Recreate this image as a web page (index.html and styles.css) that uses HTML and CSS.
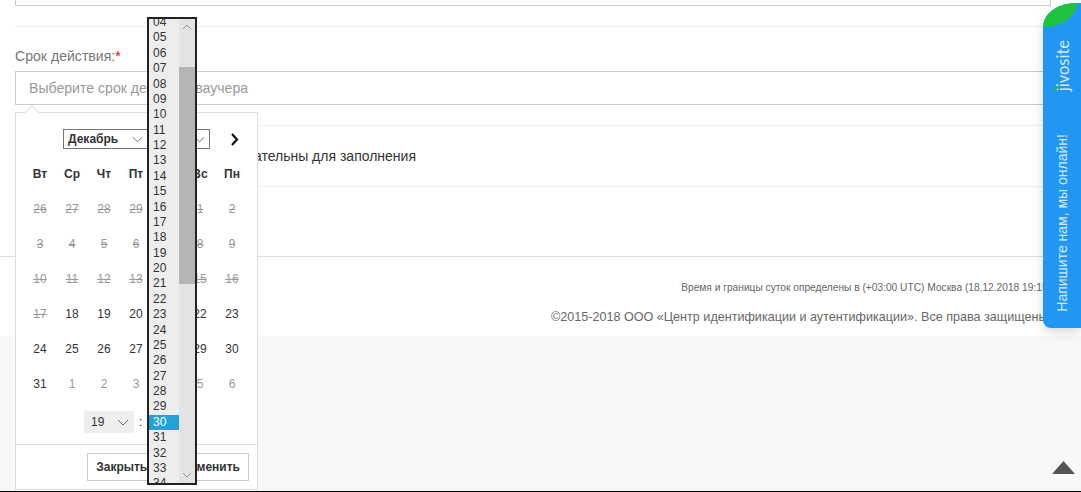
FILE: index.html
```html
<!DOCTYPE html>
<html lang="ru">
<head>
<meta charset="utf-8">
<title>Срок действия</title>
<link rel="stylesheet" href="styles.css">
</head>
<body>
<main class="main">
  <div class="field-top"></div>
  <div class="divider first"></div>
  <label class="label">Срок действия:<span class="req">*</span></label>
  <div class="input">Выберите срок действия ваучера</div>
  <div class="divider first"></div>
  <p class="note">Поля, отмеченные *, обязательны для заполнения</p>
  <div class="divider"></div>
</main>
<footer class="footer">
  <p class="tz">Время и границы суток определены в (+03:00 UTC) Москва (18.12.2018 19:15)</p>
  <p class="copy">©2015-2018 ООО «Центр идентификации и аутентификации». Все права защищены.</p>
</footer>

<div class="picker">
  <div class="picker-head">
    <div class="sel-group">
      <div class="sel month">Декабрь
        <svg class="chev" viewBox="0 0 12 7"><path d="M1 1l5 5 5-5" fill="none" stroke="#666"/></svg>
      </div>
      <div class="sel year">2018
        <svg class="chev" viewBox="0 0 12 7"><path d="M1 1l5 5 5-5" fill="none" stroke="#666"/></svg>
      </div>
    </div>
    <svg class="next" viewBox="0 0 9 13"><path d="M2 1l5 5.500-5 5.500" fill="none" stroke="#111" stroke-width="2.200"/></svg>
  </div>
  <div class="days">
    <b>Вт</b><b>Ср</b><b>Чт</b><b>Пт</b><b>Сб</b><b>Вс</b><b>Пн</b>
    <s>26</s><s>27</s><s>28</s><s>29</s><s>30</s><s>1</s><s>2</s>
    <s>3</s><s>4</s><s>5</s><s>6</s><s>7</s><s>8</s><s>9</s>
    <s>10</s><s>11</s><s>12</s><s>13</s><s>14</s><s>15</s><s>16</s>
    <s>17</s><span>18</span><span>19</span><span>20</span><span>21</span><span>22</span><span>23</span>
    <span>24</span><span>25</span><span>26</span><span>27</span><span>28</span><span>29</span><span>30</span>
    <span>31</span><i>1</i><i>2</i><i>3</i><i>4</i><i>5</i><i>6</i>
  </div>
  <div class="time">
    <div class="tsel">19
      <svg class="chev" viewBox="0 0 12 7"><path d="M1 1l5 5 5-5" fill="none" stroke="#666"/></svg>
    </div>
    <span class="colon">:</span>
  </div>
  <div class="actions">
    <button class="btn">Закрыть</button>
    <button class="btn">Применить</button>
  </div>
</div>
<div class="tip"></div>

<div class="list">
  <div class="options">
    <div>04</div><div>05</div><div>06</div><div>07</div><div>08</div><div>09</div><div>10</div><div>11</div>
    <div>12</div><div>13</div><div>14</div><div>15</div><div>16</div><div>17</div><div>18</div><div>19</div>
    <div>20</div><div>21</div><div>22</div><div>23</div><div>24</div><div>25</div><div>26</div><div>27</div>
    <div>28</div><div>29</div><div class="on">30</div><div>31</div><div>32</div><div>33</div><div>34</div>
  </div>
  <div class="bar">
    <svg class="bar-up" viewBox="0 0 10 6"><path d="M1 5l4-4 4 4" fill="none" stroke="#999"/></svg>
    <div class="thumb"></div>
    <svg class="bar-down" viewBox="0 0 10 6"><path d="M1 1l4 4 4-4" fill="none" stroke="#999"/></svg>
  </div>
</div>

<aside class="jivo">
  <svg class="leaf" viewBox="0 0 38 25"><path d="M0 24V0H35C32 13 21 24 0 24z" fill="#1fc23f"/></svg>
  <span class="jivo-logo">jivosite</span>
  <svg class="jivo-dot" viewBox="0 0 6 5"><path d="M0 5C1 2 3 0 6 0 5 3 3 5 0 5z" fill="#1fc23f"/></svg>
  <span class="jivo-text">Напишите нам, мы онлайн!</span>
</aside>

<svg class="totop" viewBox="0 0 23 13"><path d="M11.500 0L23 13H0z" fill="#555"/></svg>
<div class="edge"></div>
</body>
</html>
```

FILE: styles.css
```css
* { box-sizing: border-box; }
html, body { margin: 0; height: 100%; }
body {
  position: relative;
  height: 492px;
  overflow: hidden;
  background: #f8f8f8;
  font-family: "Liberation Sans", Arial, sans-serif;
  font-size: 14px;
  color: #333;
}
.main {
  background: #fff;
  height: 257px;
  padding: 0 30px 0 15px;
  border-bottom: 1px solid #ddd;
}
.field-top {
  height: 6px;
  border: 1px solid #ccc;
  border-top: 0;
}
.divider { height: 1px; background: #eee; }
.divider.first { margin-top: 20px; }
.label {
  display: block;
  margin-top: 20px;
  height: 18px;
  line-height: 18px;
  font-size: 14.1px;
  color: #777;
}
.req { color: #e00; }
.input {
  margin-top: 6px;
  height: 34px;
  line-height: 32px;
  padding-left: 13px;
  border: 1px solid #ccc;
  color: #999;
  font-size: 14.1px;
}
.note {
  margin: 0;
  height: 60px;
  line-height: 60px;
  padding-left: 72px;
  color: #333;
}
.footer {
  background: #fff;
  height: 79px;
  padding: 25px 30px 0 0;
  text-align: right;
  color: #666;
}
.footer p { margin: 0; white-space: nowrap; }
.tz { font-size: 10.2px; line-height: 12px; }
.copy { font-size: 12.6px; line-height: 16px; margin-top: 15px !important; }

.picker {
  position: absolute;
  left: 15px;
  top: 112px;
  width: 243px;
  height: 378px;
  background: #fff;
  border: 1px solid #ddd;
  font-size: 12px;
}
.tip {
  position: absolute;
  left: 27px;
  top: 107px;
  width: 10px;
  height: 10px;
  background: #fff;
  border: 1px solid #ddd;
  border-right: 0;
  border-bottom: 0;
  transform: rotate(45deg);
}
.picker-head {
  display: flex;
  align-items: center;
  height: 20px;
  margin: 16px 0 7px 47px;
}
.sel-group { display: flex; }
.sel {
  height: 20px;
  line-height: 18px;
  border: 1px solid #777;
  font-weight: bold;
  padding-left: 4px;
  position: relative;
}
.month { width: 85px; }
.year { width: 63px; margin-left: -1px; }
.chev { position: absolute; width: 11px; height: 7px; top: 6px; right: 4px; }
.next { width: 9px; height: 13px; margin-left: 20px; }
.days {
  display: grid;
  grid-template-columns: repeat(7, 32px);
  grid-auto-rows: 35px;
  padding-left: 8px;
  align-items: center;
  justify-items: center;
}
.days b { font-weight: bold; color: #333; }
.days s { color: #999; }
.days span { color: #333; }
.days i { font-style: normal; color: #999; }
.time {
  display: flex;
  align-items: center;
  margin: 10px 0 11px 68px;
  height: 22px;
}
.tsel {
  position: relative;
  width: 50px;
  height: 22px;
  line-height: 22px;
  padding-left: 7px;
  background: #eee;
  color: #333;
}
.tsel .chev { top: 8px; right: 5px; width: 12px; }
.colon { margin-left: 5px; color: #333; }
.actions {
  display: flex;
  justify-content: flex-end;
  gap: 8px;
  height: 45px;
  padding: 8px 8px 0;
  border-top: 1px solid #ddd;
}
.btn {
  height: 28px;
  padding: 0 8px;
  background: #fff;
  border: 1px solid #ccc;
  font: bold 12px "Liberation Sans", Arial, sans-serif;
  color: #333;
}

.list {
  position: absolute;
  left: 147px;
  top: 17px;
  width: 50px;
  height: 468px;
  display: flex;
  border: 2px solid #222;
  overflow: hidden;
  background: #ededed;
  font-size: 12px;
  color: #333;
}
.options { width: 30px; margin-top: -4px; flex: none; }
.options div { height: 15.38px; line-height: 15.38px; padding-left: 4px; }
.options .on { background: #26a0da; color: #fff; }
.bar {
  position: relative;
  width: 16px;
  background: #e3e3e3;
  padding-top: 48px;
}
.thumb { height: 217px; background: #b5b5b5; }
.bar-up, .bar-down { position: absolute; left: 3px; width: 10px; height: 6px; }
.bar-up { top: 5px; }
.bar-down { bottom: 5px; }

.jivo {
  position: absolute;
  left: 1043px;
  top: 3px;
  width: 38px;
  height: 325px;
  background: #2196f3;
  border-radius: 33px 0 0 8px / 24px 0 0 8px;
  overflow: hidden;
  box-shadow: 0 4px 12px rgba(0, 0, 0, .15);
  color: #d4e9fc;
}
.leaf { position: absolute; left: 0; top: 0; width: 38px; height: 25px; }
.jivo-logo, .jivo-text {
  position: absolute;
  writing-mode: vertical-rl;
  transform: rotate(180deg);
  white-space: nowrap;
}
.jivo-logo { left: 11px; top: 37px; font: 16.5px/18px Lato, sans-serif; }
.jivo-dot { position: absolute; left: 10px; top: 83px; width: 6px; height: 5px; }
.jivo-text { left: 10px; top: 131px; font-size: 14px; line-height: 18px; }

.totop { position: absolute; left: 1052px; top: 461px; width: 23px; height: 13px; }
.edge { position: absolute; left: 0; right: 0; bottom: 0; height: 1px; background: #000; }
```
